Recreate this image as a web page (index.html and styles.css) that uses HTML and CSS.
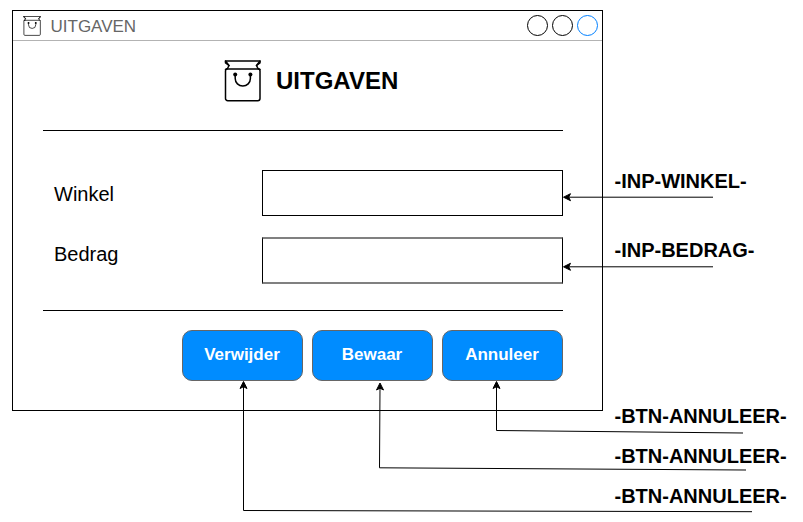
FILE: index.html
```html
<!DOCTYPE html>
<html lang="nl">
<head>
<meta charset="utf-8">
<title>Uitgaven</title>
<link rel="stylesheet" href="styles.css">
</head>
<body>
<svg class="symbols" aria-hidden="true">
  <symbol id="bag" viewBox="0 0 37 42">
    <g fill="none" stroke="currentColor" stroke-width="1.500" stroke-linejoin="round" stroke-linecap="round">
      <path d="M1.500 1H36V3L32.500 5.500L34 8.500L36 9.500M1.500 1V3L5 5.500L3.500 8.500L1.500 9.500"/>
      <path d="M1.500 1L5 5.500M36 1L32.500 5.500"/>
      <path d="M3.500 9H34A2 2 0 0 1 36 11V38.500a2.200 2.200 0 0 1-2.200 2.200H3.700A2.200 2.200 0 0 1 1.500 38.500V11A2 2 0 0 1 3.500 9Z"/>
      <path d="M11.200 14.700V18.500a7.600 7.600 0 0 0 15.200 0V14.700"/>
    </g>
    <circle cx="11.200" cy="14.500" r="2" fill="currentColor"/>
    <circle cx="26.400" cy="14.500" r="2" fill="currentColor"/>
  </symbol>
</svg>
<main class="board">
  <section class="window">
    <header class="titlebar">
      <svg class="bag-small"><use href="#bag"/></svg>
      <span class="title">UITGAVEN</span>
      <div class="controls"><i></i><i></i><i class="active"></i></div>
    </header>
    <div class="content">
      <div class="heading">
        <svg class="bag-large"><use href="#bag"/></svg>
        <h1>UITGAVEN</h1>
      </div>
      <form class="fields">
        <label class="field"><span>Winkel</span><input type="text"></label>
        <label class="field amount"><span>Bedrag</span><input type="text"></label>
      </form>
      <div class="actions">
        <button type="button">Verwijder</button>
        <button type="button">Bewaar</button>
        <button type="button">Annuleer</button>
      </div>
    </div>
  </section>
  <aside class="notes">
    <p>-INP-WINKEL-</p>
    <p class="second">-INP-BEDRAG-</p>
    <p class="third">-BTN-ANNULEER-</p>
    <p>-BTN-ANNULEER-</p>
    <p>-BTN-ANNULEER-</p>
  </aside>
  <svg class="connectors" viewBox="0 0 803 522">
    <defs>
      <path id="head" d="M0.500 0L7.500 -3.500L5.700 0L7.500 3.500Z" stroke="#000"/>
    </defs>
    <g fill="none" stroke="#000">
      <path d="M713 197.200H568"/>
      <path d="M713 266.800H568"/>
      <path d="M743 433L496.500 430.500V386"/>
      <path d="M746 470L379.500 467.800L380 387"/>
      <path d="M752 511.700L243.500 510.500V386"/>
    </g>
    <use href="#head" transform="translate(563 197.200)"/>
    <use href="#head" transform="translate(563 266.800)"/>
    <use href="#head" transform="translate(496.500 381) rotate(90)"/>
    <use href="#head" transform="translate(380 382.500) rotate(90)"/>
    <use href="#head" transform="translate(243.500 381) rotate(90)"/>
  </svg>
</main>
</body>
</html>
```
FILE: styles.css
```css
* { box-sizing: border-box; }

body {
  margin: 0;
  background: #fff;
  color: #000;
  font-family: "Liberation Sans", Arial, sans-serif;
}

.symbols { position: absolute; width: 0; height: 0; }

.board {
  position: relative;
  display: flex;
  width: 803px;
  height: 522px;
  padding: 10px 0 0 12px;
  overflow: hidden;
}

.window {
  width: 591px;
  height: 401px;
  border: 1px solid #000;
}

.titlebar {
  display: flex;
  align-items: center;
  height: 30px;
  padding: 0 4px 0 10px;
  border-bottom: 1px solid #b3b3b3;
}

.bag-small { width: 18px; height: 20px; }

.title {
  padding-top: 2px;
  margin-left: 9.5px;
  color: #666;
  font-size: 17px;
  line-height: 20px;
}

.controls { display: flex; gap: 4px; margin-left: auto; }

.controls i {
  width: 21px;
  height: 21px;
  border: 1px solid #000;
  border-radius: 50%;
}

.controls .active { border-color: #007fff; }

.content { width: 550px; padding-left: 30px; }

.heading {
  display: flex;
  align-items: flex-start;
  height: 90px;
  padding: 19px 0 0 181px;
  border-bottom: 1px solid #000;
}

.bag-large { width: 37px; height: 42px; }

h1 {
  margin: 7px 0 0 15px;
  font-size: 24px;
  line-height: 28px;
}

.fields {
  height: 180px;
  padding-top: 39px;
  border-bottom: 1px solid #000;
}

.field {
  display: flex;
  justify-content: space-between;
  padding-left: 11px;
  font-size: 20px;
  line-height: 24px;
}

.field span { padding-top: 12px; }

.field input {
  width: 301px;
  height: 46px;
  padding: 0 10px;
  border: 1px solid #000;
  background: #fff;
  font: inherit;
}

.field.amount { margin-top: 21px; }
.field.amount span { padding-top: 5px; }

.field.amount input {
  height: 47px;
  border-width: 2px 1px;
  border-color: #808080 #000;
}

.actions {
  display: flex;
  justify-content: flex-end;
  gap: 9px;
  padding-top: 19px;
}

.actions button {
  width: 121px;
  height: 51px;
  padding: 0 1px 2px 0;
  border: 1px solid #666;
  border-radius: 10px;
  background: #008cff;
  color: #fff;
  font: bold 17px/20px "Liberation Sans", Arial, sans-serif;
}

.notes { padding-top: 159px; margin-left: 11.5px; }

.notes p {
  margin: 0 0 16px;
  font-size: 20px;
  font-weight: bold;
  line-height: 24px;
  white-space: nowrap;
}

.notes .second { margin-top: 45px; }
.notes .third { margin-top: 142px; }

.connectors {
  position: absolute;
  inset: 0;
  width: 803px;
  height: 522px;
  pointer-events: none;
}
```
